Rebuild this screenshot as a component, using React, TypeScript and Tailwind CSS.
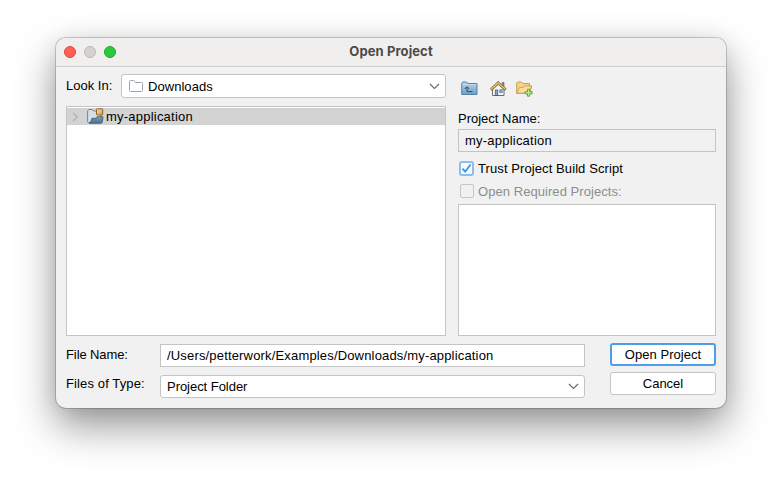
import React from "react";

function Chevron() {
  return (
    <svg width="11" height="7" viewBox="0 0 11 7" fill="none" stroke="#666" strokeWidth="1.1">
      <path d="M1 1L5.5 5.5L10 1" />
    </svg>
  );
}

function FolderIcon() {
  return (
    <svg width="16" height="14" viewBox="0 0 16 14" fill="#fff" stroke="#9aa7b0" strokeWidth="1">
      <path d="M1.5 2.5Q1.5 1.5 2.5 1.5H5.6L7.4 3.5H13.5Q14.5 3.5 14.5 4.5V11.5Q14.5 12.5 13.5 12.5H2.5Q1.5 12.5 1.5 11.5Z" />
    </svg>
  );
}

function ProjectIcon() {
  return (
    <svg width="17" height="17" viewBox="0 0 17 17">
      <defs>
        <linearGradient id="front" x1="0" y1="0" x2="0" y2="1">
          <stop offset="0" stopColor="#7f9ab2" />
          <stop offset="1" stopColor="#4f7090" />
        </linearGradient>
        <linearGradient id="cube" x1="0" y1="0" x2="1" y2="1">
          <stop offset="0" stopColor="#f9dca0" />
          <stop offset="1" stopColor="#dc9a42" />
        </linearGradient>
      </defs>
      <path d="M.6 3L2 1.5H5L6.5 3H14V14.5H1.5Q.6 14.5 .6 13.5Z" fill="#d3e0ea" stroke="#5b6f82" strokeWidth=".8" />
      <path d="M5 10.3H8.5L10 8.8H16L15.3 14Q15 15.3 13.6 15.3H2Q3.7 14.8 4 13Z" fill="url(#front)" stroke="#3b566f" strokeWidth=".8" />
      <rect x="9.5" y=".8" width="6.2" height="6.2" rx=".7" fill="url(#cube)" stroke="#8a5b25" strokeWidth=".9" />
    </svg>
  );
}

function UpFolderIcon() {
  return (
    <svg width="17" height="15" viewBox="0 0 17 15">
      <defs>
        <linearGradient id="blue" x1="0" y1="0" x2="0" y2="1">
          <stop offset="0" stopColor="#b6d6e9" />
          <stop offset="1" stopColor="#6e9fc5" />
        </linearGradient>
      </defs>
      <path d="M.7 13.5V2.5L1.7 1H5.5L6.8 2.5H16V13.5Z" fill="url(#blue)" stroke="#4b7ba0" strokeWidth=".9" />
      <path d="M1.5 3.7H15.3" stroke="#d3e6f1" strokeWidth=".7" />
      <path d="M3.8 8L6 5.6L8.2 8M6 6.2V10.6H11.5" fill="none" stroke="#294c68" strokeWidth="1" />
    </svg>
  );
}

function HomeIcon() {
  return (
    <svg width="17" height="16" viewBox="0 0 17 16">
      <path d="M12.2 1.5H14V6H12.2Z" fill="#858b93" stroke="#50565e" strokeWidth=".6" />
      <path d="M2.5 8L8.2 2.5L14 8V14.5H2.5Z" fill="#f5f7f9" stroke="#58616c" strokeWidth=".9" />
      <path d="M1 8.7L8.2 1.8L15.6 8.7" fill="none" stroke="#735b2a" strokeWidth="2.8" />
      <path d="M1.3 8.2L8.2 1.7L15.3 8.2" fill="none" stroke="#e4c86b" strokeWidth="1.5" />
      <rect x="5.2" y="9" width="2.6" height="5.3" fill="#8fa3ba" stroke="#3c4858" strokeWidth=".6" />
      <rect x="9.8" y="8.8" width="2.4" height="2.6" fill="#94c9e8" stroke="#345c80" strokeWidth=".7" />
    </svg>
  );
}

function NewFolderIcon() {
  return (
    <svg width="18" height="16" viewBox="0 0 18 16">
      <path d="M.7 12.5V2L1.7 1H5.5L7 2.5H13.5V5H15.8L13.3 12.5Z" fill="#f3d486" stroke="#c59a45" strokeWidth=".9" />
      <path d="M1 12.2L3.5 6.5H7.5L8.7 5H15.6L13.3 12.2Z" fill="#f8df9b" stroke="#c59a45" strokeWidth=".8" />
      <path d="M11.5 8.2H13.7V10.6H16.1V12.8H13.7V15.2H11.5V12.8H9.1V10.6H11.5Z" fill="#b9f090" stroke="#45a62c" strokeWidth=".9" />
    </svg>
  );
}

export default function App() {
  return (
    <main className="h-[482px] w-[782px] overflow-hidden bg-white pt-[38px] pl-14 font-['Liberation_Sans',Arial,sans-serif] text-[13px] leading-4 text-black">
      <section className="h-[370px] w-[670px] overflow-hidden rounded-[10px] bg-[#f1f1f1] shadow-[0_0_0_1px_rgba(0,0,0,0.18),0_18px_40px_rgba(0,0,0,0.42),0_2px_20px_rgba(0,0,0,0.08)]">
        <header className="flex h-[29px] items-center border-b border-[#cfcfcf] bg-[#f0efee] px-2">
          <div className="flex w-[100px] gap-2">
            <i className="size-3 rounded-full border border-[#e2463f] bg-[#ff5f57]" />
            <i className="size-3 rounded-full border border-[#bcbab9] bg-[#d4d3d2]" />
            <i className="size-3 rounded-full border border-[#1dab2c] bg-[#28c840]" />
          </div>
          <h1 className="flex-1 pb-0.5 text-center font-['Inter',sans-serif] text-[13px] font-bold tracking-[0.11px] text-[#4b4a49]">Open Project</h1>
          <div className="w-[100px]" />
        </header>

        <div className="flex h-[269px] gap-3 px-[10px] pt-[7px]">
          <div className="w-[380px]">
            <div className="flex h-6">
              <label className="w-[55px] pt-1 whitespace-nowrap">Look In:</label>
              <div className="flex h-6 w-[325px] items-center rounded-[3px] border border-[#c4c4c4] bg-white pr-[5px] pl-[6px]">
                <FolderIcon />
                <span className="ml-1 flex-1 pt-px tracking-[0.05px]">Downloads</span>
                <Chevron />
              </div>
            </div>
            <div className="mt-2 h-[230px] border border-[#c4c4c4] bg-white pt-px">
              <div className="flex h-[17px] items-center bg-[#d3d3d3] pl-[5px]">
                <svg width="7" height="10" viewBox="0 0 7 10" fill="none" stroke="#adadad" strokeWidth="1.1">
                  <path d="M1 1L5.5 5L1 9" />
                </svg>
                <div className="ml-2"><ProjectIcon /></div>
                <span className="ml-[2px] tracking-[0.22px]">my-application</span>
              </div>
            </div>
          </div>

          <div className="w-[258px]">
            <div className="flex h-[37px] pt-[7px] pl-[3px]">
              <UpFolderIcon />
              <div className="ml-3"><HomeIcon /></div>
              <div className="ml-[9px]"><NewFolderIcon /></div>
            </div>
            <div className="h-[18px] whitespace-nowrap">Project Name:</div>
            <div className="h-[23px] border border-[#c4c4c4] pt-[3px] pl-[6px] tracking-[0.22px]">my-application</div>
            <div className="mt-[8px] flex h-4 items-center">
              <div className="ml-px flex size-[15px] items-center justify-center rounded-[3px] border-2 border-[#8bbdf0] bg-[#f7fbff]">
                <svg width="11" height="11" viewBox="0 0 11 11" fill="none" stroke="#3b91e8" strokeWidth="1.8">
                  <path d="M1.5 5.7L4.2 8.7L9.6 1.5" />
                </svg>
              </div>
              <span className="ml-1 pt-px tracking-[0.09px]">Trust Project Build Script</span>
            </div>
            <div className="mt-[7px] flex h-4 items-center text-[#8d8d8d]">
              <div className="ml-[2px] size-[14px] rounded-[2px] border border-[#c6c6c6]" />
              <span className="ml-1 pt-px tracking-[0.06px]">Open Required Projects:</span>
            </div>
            <div className="mt-[5px] h-[132px] border border-[#c4c4c4] bg-white" />
          </div>
        </div>

        <div className="flex gap-[25px] pt-2 pl-[10px]">
          <div className="w-[519px]">
            <div className="flex h-[23px]">
              <label className="w-[94px] pt-[3px] tracking-[-0.1px]">File Name:</label>
              <div className="w-[425px] border border-[#c4c4c4] bg-white pt-[3px] pl-[6px] tracking-[0.167px]">/Users/petterwork/Examples/Downloads/my-application</div>
            </div>
            <div className="mt-2 flex h-[23px]">
              <label className="w-[94px] pt-px tracking-[0.12px]">Files of Type:</label>
              <div className="flex w-[425px] items-center rounded-[3px] border border-[#c4c4c4] bg-white pr-[5px] pl-[6px]">
                <span className="flex-1 tracking-[-0.04px]">Project Folder</span>
                <Chevron />
              </div>
            </div>
          </div>
          <div className="-mt-px flex w-[106px] flex-col gap-[6px]">
            <button className="h-[23px] rounded-[3px] border-2 border-[#4f9fe8] bg-white tracking-[0.05px]">Open Project</button>
            <button className="h-[23px] rounded-[3px] border border-[#c4c4c4] bg-white">Cancel</button>
          </div>
        </div>
      </section>
    </main>
  );
}
